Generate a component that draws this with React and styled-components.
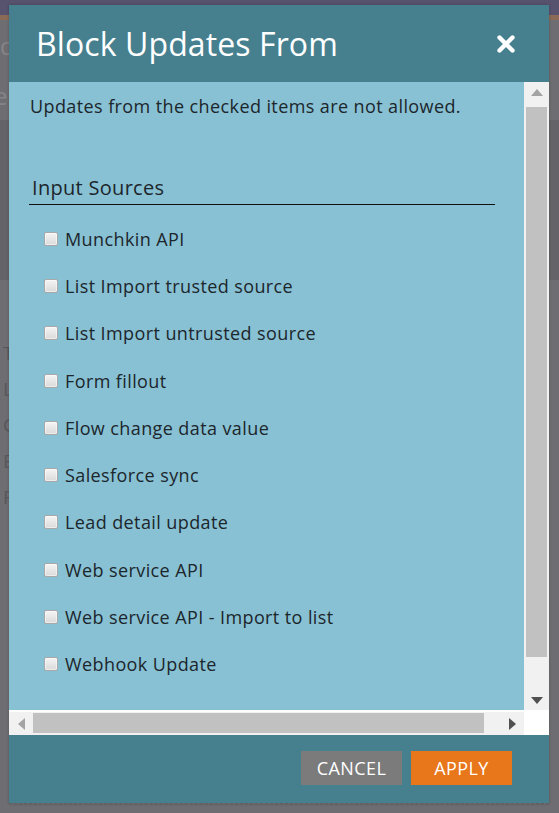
import React from 'react'
import styled, { createGlobalStyle } from 'styled-components'

const GlobalStyle = createGlobalStyle`
  html, body {
    margin: 0;
    padding: 0;
    height: 100%;
    overflow: hidden;
  }
  body {
    background: #6e6d71;
    font-family: "Open Sans", "DejaVu Sans", sans-serif;
  }
`

const SOURCES = [
  'Munchkin API',
  'List Import trusted source',
  'List Import untrusted source',
  'Form fillout',
  'Flow change data value',
  'Salesforce sync',
  'Lead detail update',
  'Web service API',
  'Web service API - Import to list',
  'Webhook Update',
]

function CloseIcon() {
  return (
    <svg width="20" height="20" viewBox="0 0 20 20">
      <path d="M3.5 3.5 L16.5 16.5 M16.5 3.5 L3.5 16.5" stroke="#fff" strokeWidth="4.4" strokeLinecap="round" />
    </svg>
  )
}

function Arrow({ dir, color = '#a3a3a3' }) {
  const paths = {
    up: 'M0 7 L6 0 L12 7 Z',
    down: 'M0 0 L12 0 L6 7 Z',
    left: 'M7 0 L7 12 L0 6 Z',
    right: 'M0 0 L7 6 L0 12 Z',
  }
  const vertical = dir === 'up' || dir === 'down'
  return (
    <svg width={vertical ? 12 : 7} height={vertical ? 7 : 12} viewBox={vertical ? '0 0 12 7' : '0 0 7 12'}>
      <path d={paths[dir]} fill={color} />
    </svg>
  )
}

export default function App() {
  return (
    <>
      <GlobalStyle />
      <Page>
        <TopStrip />
        <AccentStrip />
        <PageRow>ld</PageRow>
        <PageRow>el</PageRow>
        <PageBand />
        <PageList>
          <span>T</span>
          <span>L</span>
          <span>C</span>
          <span>E</span>
          <span>F</span>
        </PageList>
      </Page>

      <Dialog>
        <Header>
          <Title>Block Updates From</Title>
          <CloseButton aria-label="Close">
            <CloseIcon />
          </CloseButton>
        </Header>

        <Body>
          <Content>
            <Intro>Updates from the checked items are not allowed.</Intro>
            <SectionTitle>Input Sources</SectionTitle>
            <List>
              {SOURCES.map((s) => (
                <Item key={s}>
                  <Box type="checkbox" />
                  <span>{s}</span>
                </Item>
              ))}
            </List>
          </Content>

          <VBar>
            <ArrowCell>
              <Arrow dir="up" />
            </ArrowCell>
            <VTrack>
              <VThumb />
            </VTrack>
            <ArrowCell>
              <Arrow dir="down" color="#505050" />
            </ArrowCell>
          </VBar>

          <HBar>
            <HArrowCell>
              <Arrow dir="left" />
            </HArrowCell>
            <HTrack>
              <HThumb />
            </HTrack>
            <HArrowCell>
              <Arrow dir="right" color="#505050" />
            </HArrowCell>
          </HBar>
          <Corner />
        </Body>

        <Footer>
          <Button $variant="cancel">CANCEL</Button>
          <Button $variant="apply">APPLY</Button>
        </Footer>
      </Dialog>
    </>
  )
}

const Page = styled.div`
  height: 813px;
  display: flex;
  flex-direction: column;
  color: #8a898d;
  font-size: 17px;
`

const TopStrip = styled.div`
  height: 15px;
  background: #57526d;
`

const AccentStrip = styled.div`
  height: 5px;
  background: #8a6a55;
`

const PageRow = styled.div`
  height: 50px;
  display: flex;
  align-items: center;
  margin-left: -6px;
  color: #858488;
  font-size: 24px;
`

const PageBand = styled.div`
  height: 160px;
  background: #646367;
`

const PageList = styled.div`
  display: flex;
  flex-direction: column;
  gap: 10px;
  padding-top: 60px;
  padding-left: 3px;
  font-size: 19px;
  line-height: 26px;
  color: #58575b;
`

const Dialog = styled.div`
  position: fixed;
  left: 9px;
  top: 5px;
  width: 540px;
  height: 798px;
  display: flex;
  flex-direction: column;
  border-bottom: 1px dashed #5f5e62;
  box-shadow: 0 0 3px rgba(0, 0, 0, 0.2);
`

const Header = styled.div`
  height: 77px;
  flex: none;
  background: #46808f;
  display: flex;
  align-items: center;
  justify-content: space-between;
  padding: 0 33px 0 27px;
`

const Title = styled.h1`
  margin: 0;
  font-weight: 400;
  font-size: 32px;
  color: #fff;
  letter-spacing: 0.1px;
`

const CloseButton = styled.button`
  border: 0;
  background: none;
  padding: 0;
  display: flex;
  cursor: pointer;
`

const Body = styled.div`
  flex: none;
  height: 653px;
  display: grid;
  grid-template-columns: 515px 25px;
  grid-template-rows: 628px 25px;
`

const Content = styled.div`
  background: #88c1d3;
  padding: 12px 29px 0 20px;
  overflow: hidden;
  color: #1c262c;
`

const Intro = styled.p`
  margin: 0 0 0 1px;
  font-size: 18px;
  letter-spacing: 0.4px;
  line-height: 24px;
`

const SectionTitle = styled.h2`
  margin: 56px 0 0;
  font-weight: 400;
  font-size: 20px;
  letter-spacing: 0.3px;
  line-height: 27px;
  padding: 0 0 3px 3px;
  border-bottom: 1px solid #111;
`

const List = styled.ul`
  list-style: none;
  margin: 10px 0 0;
  padding: 0 0 0 15px;
`

const Item = styled.li`
  height: 47.3px;
  display: flex;
  align-items: center;
  gap: 7px;
  font-size: 18px;
  letter-spacing: 0.4px;
`

const Box = styled.input`
  appearance: none;
  margin: 0;
  width: 14px;
  height: 14px;
  border: 1px solid #a8a8a8;
  border-radius: 2px;
  background: linear-gradient(#f4f4f4, #dadada);
  box-shadow: inset 0 0 0 1px rgba(255, 255, 255, 0.5);
`

const VBar = styled.div`
  background: #f1f1f1;
  display: flex;
  flex-direction: column;
`

const ArrowCell = styled.div`
  height: 20px;
  flex: none;
  display: flex;
  align-items: center;
  justify-content: center;
`

const VTrack = styled.div`
  flex: 1;
  padding: 5px 2px 33px;
  display: flex;
`

const VThumb = styled.div`
  flex: 1;
  background: #c1c1c1;
`

const HBar = styled.div`
  background: #f1f1f1;
  border-top: 2px solid #fff;
  display: flex;
  align-items: stretch;
`

const HArrowCell = styled.div`
  width: 24px;
  flex: none;
  display: flex;
  align-items: center;
  justify-content: center;
`

const HTrack = styled.div`
  flex: 1;
  padding: 1px 16px 2px 0;
  display: flex;
`

const HThumb = styled.div`
  flex: 1;
  background: #c1c1c1;
`

const Corner = styled.div`
  background: #fff;
`

const Button = styled.button`
  height: 34px;
  width: 101px;
  border: 0;
  padding: 0;
  font-family: "Open Sans", sans-serif;
  font-size: 18px;
  letter-spacing: 0.4px;
  color: #fff;
  background: ${(p) => (p.$variant === 'apply' ? '#e8761b' : '#7b7b7b')};
  cursor: pointer;
`

const Footer = styled.div`
  flex: 1;
  background: #46808f;
  display: flex;
  justify-content: flex-end;
  align-items: flex-start;
  gap: 9px;
  padding: 16px 37px 0 0;
`
